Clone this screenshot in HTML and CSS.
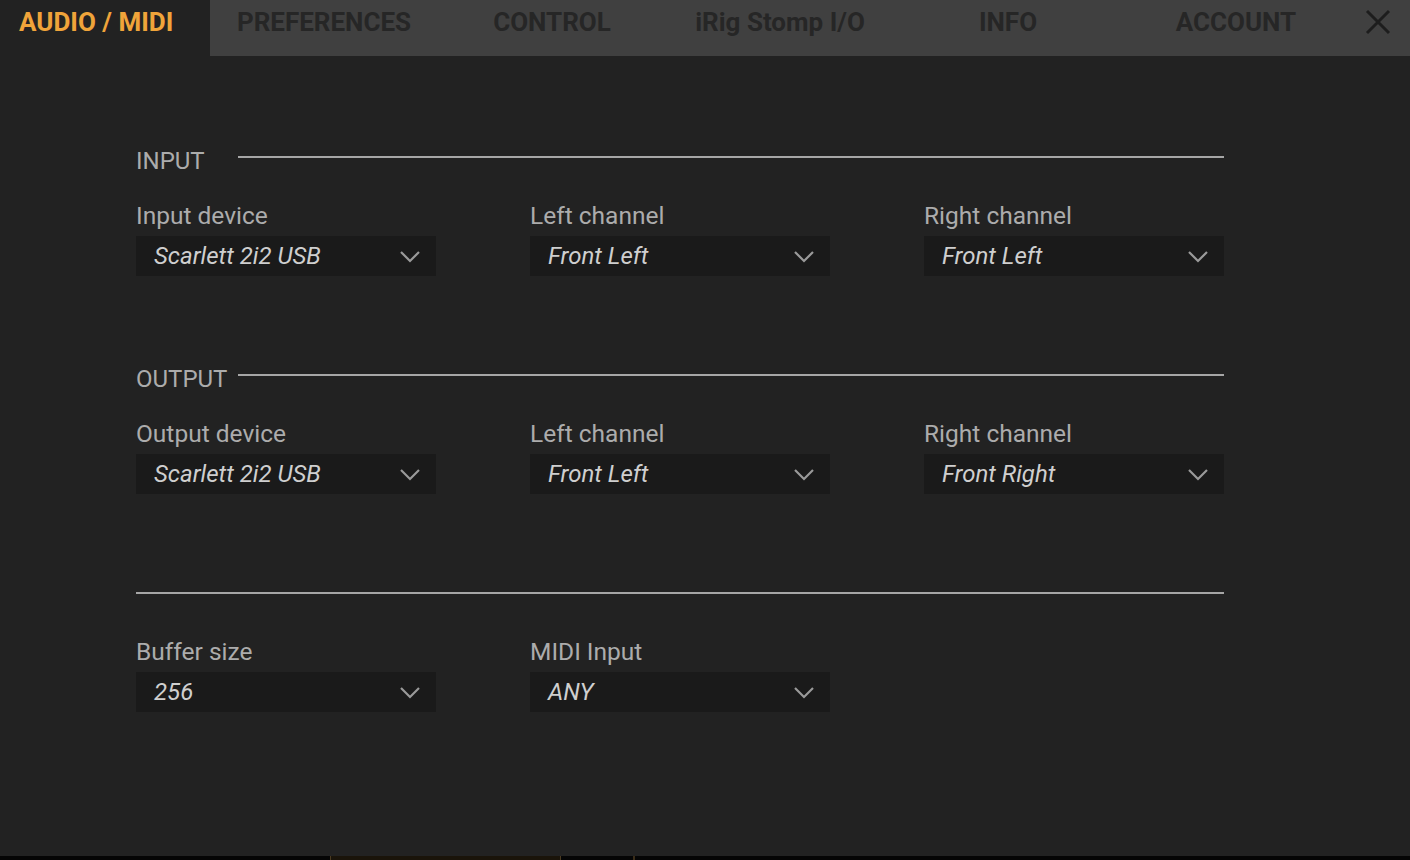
FILE: index.html
```html
<!DOCTYPE html>
<html lang="en">
<head>
    <meta charset="UTF-8">
    <meta name="viewport" content="width=device-width, initial-scale=1.0">
    <title>Settings - Audio / MIDI</title>
    <link rel="stylesheet" href="styles.css">
</head>
<body>
    <div class="window">
        <nav class="tabs">
            <div class="tab tab-first active">AUDIO / MIDI</div>
            <div class="tab">PREFERENCES</div>
            <div class="tab">CONTROL</div>
            <div class="tab">iRig Stomp I/O</div>
            <div class="tab">INFO</div>
            <div class="tab">ACCOUNT</div>
            <div class="close">
                <svg width="26" height="26" viewBox="0 0 26 26">
                    <path d="M2 2 L24 24 M24 2 L2 24" stroke="#1d1d1d" stroke-width="3" fill="none"/>
                </svg>
            </div>
        </nav>

        <main class="content">
            <section class="group">
                <div class="group-head">
                    <span class="group-title">INPUT</span>
                    <span class="rule"></span>
                </div>
                <div class="fields">
                    <div class="field">
                        <div class="label">Input device</div>
                        <div class="select"><span>Scarlett 2i2 USB</span><svg class="chev" width="22" height="14" viewBox="0 0 22 14"><path d="M2 2 L11 11 L20 2" stroke="#9a9a9a" stroke-width="2.2" fill="none"/></svg></div>
                    </div>
                    <div class="field">
                        <div class="label">Left channel</div>
                        <div class="select"><span>Front Left</span><svg class="chev" width="22" height="14" viewBox="0 0 22 14"><path d="M2 2 L11 11 L20 2" stroke="#9a9a9a" stroke-width="2.2" fill="none"/></svg></div>
                    </div>
                    <div class="field">
                        <div class="label">Right channel</div>
                        <div class="select"><span>Front Left</span><svg class="chev" width="22" height="14" viewBox="0 0 22 14"><path d="M2 2 L11 11 L20 2" stroke="#9a9a9a" stroke-width="2.2" fill="none"/></svg></div>
                    </div>
                </div>
            </section>

            <section class="group">
                <div class="group-head">
                    <span class="group-title">OUTPUT</span>
                    <span class="rule"></span>
                </div>
                <div class="fields">
                    <div class="field">
                        <div class="label">Output device</div>
                        <div class="select"><span>Scarlett 2i2 USB</span><svg class="chev" width="22" height="14" viewBox="0 0 22 14"><path d="M2 2 L11 11 L20 2" stroke="#9a9a9a" stroke-width="2.2" fill="none"/></svg></div>
                    </div>
                    <div class="field">
                        <div class="label">Left channel</div>
                        <div class="select"><span>Front Left</span><svg class="chev" width="22" height="14" viewBox="0 0 22 14"><path d="M2 2 L11 11 L20 2" stroke="#9a9a9a" stroke-width="2.2" fill="none"/></svg></div>
                    </div>
                    <div class="field">
                        <div class="label">Right channel</div>
                        <div class="select"><span>Front Right</span><svg class="chev" width="22" height="14" viewBox="0 0 22 14"><path d="M2 2 L11 11 L20 2" stroke="#9a9a9a" stroke-width="2.2" fill="none"/></svg></div>
                    </div>
                </div>
            </section>

            <section class="group">
                <div class="group-head">
                    <span class="rule"></span>
                </div>
                <div class="fields">
                    <div class="field">
                        <div class="label">Buffer size</div>
                        <div class="select"><span>256</span><svg class="chev" width="22" height="14" viewBox="0 0 22 14"><path d="M2 2 L11 11 L20 2" stroke="#9a9a9a" stroke-width="2.2" fill="none"/></svg></div>
                    </div>
                    <div class="field">
                        <div class="label">MIDI Input</div>
                        <div class="select"><span>ANY</span><svg class="chev" width="22" height="14" viewBox="0 0 22 14"><path d="M2 2 L11 11 L20 2" stroke="#9a9a9a" stroke-width="2.2" fill="none"/></svg></div>
                    </div>
                </div>
            </section>
        </main>

        <footer class="strip">
            <span class="strip-box"></span>
            <span class="strip-tick"></span>
        </footer>
    </div>
</body>
</html>
```

FILE: styles.css
```css
body {
    margin: 0;
    padding: 0;
    background: #222222;
    font-family: Roboto, "Liberation Sans", sans-serif;
    overflow: hidden;
}
.window {
    width: 1410px;
    height: 860px;
    display: flex;
    flex-direction: column;
    background: #222222;
}
.tabs {
    height: 56px;
    display: flex;
    background: #404040;
    flex-shrink: 0;
}
.tab {
    width: 228px;
    display: flex;
    align-items: center;
    justify-content: center;
    font-size: 26px;
    font-weight: 700;
    color: #262626;
    padding-bottom: 13px;
    box-sizing: border-box;
}
.tab-first {
    width: 210px;
    justify-content: flex-start;
    padding-left: 19px;
}
.tab.active {
    background: #222222;
    color: #f0a43a;
}
.close {
    flex: 1;
    display: flex;
    align-items: center;
    justify-content: center;
    padding-right: 5px;
    padding-bottom: 12px;
}
.content {
    flex: 1;
    padding: 91px 0 0 136px;
}
.group {
    width: 1088px;
    margin-bottom: 89px;
}
.group-head {
    height: 28px;
    display: flex;
    align-items: flex-start;
    margin-bottom: 27px;
}
.group-title {
    width: 102px;
    flex-shrink: 0;
    font-size: 24px;
    line-height: 28px;
    color: #acacac;
}
.rule {
    flex: 1;
    height: 2px;
    margin-top: 9px;
    background: #a6a6a6;
}
.fields {
    display: flex;
    gap: 94px;
}
.field {
    width: 300px;
}
.label {
    font-size: 24.5px;
    line-height: 28px;
    color: #acacac;
    margin-bottom: 6px;
}
.select {
    height: 40px;
    display: flex;
    align-items: center;
    justify-content: space-between;
    padding: 0 15px 0 18px;
    background: #1a1a1a;
    font-size: 24px;
    font-style: italic;
    color: #cfcfcf;
}
.select span {
    line-height: 40px;
}
.chev {
    margin-top: 1px;
}
.strip {
    height: 4px;
    background: #050505;
    display: flex;
    flex-shrink: 0;
}
.strip-box {
    width: 229px;
    margin-left: 330px;
    border-left: 1px solid #4a3a20;
    border-right: 1px solid #4a3a20;
    background: #1a140a;
}
.strip-tick {
    width: 2px;
    margin-left: 72px;
    background: #3a2c18;
}
```
